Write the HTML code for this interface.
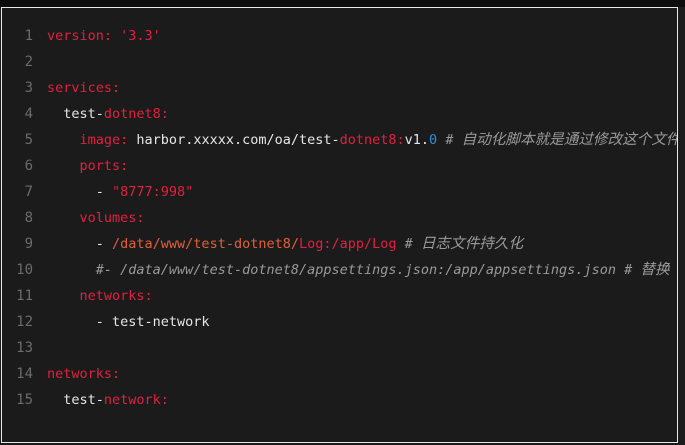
<!DOCTYPE html>
<html><head><meta charset="utf-8"><style>
html,body{margin:0;padding:0;background:#1c1c1c;width:685px;height:445px;overflow:hidden}
.box{position:absolute;left:1px;top:7px;width:675px;height:434px;border:1px solid #e8e8e8;background:#1b1b1b;overflow:hidden}
.top{position:absolute;left:0;top:0;width:685px;height:7px;background:#0d0d0d}
.l{position:absolute;left:0;height:26px;line-height:26px;white-space:pre;font-family:"DejaVu Sans Mono","Liberation Mono","Noto Sans CJK SC",monospace;font-size:13.5px;color:#e6e6e6}
.n{display:inline-block;width:31px;text-align:right;color:#6b6b6b;margin-right:14px;font-size:14px}
.r{color:#e2203f}.o{color:#e2603a}.b{color:#2d8fe0}.c{color:#9a9a9a;font-style:italic}
.k{font-size:14.6px}
</style></head><body>
<div class="top"></div>
<div class="box">
<div class="l" style="top:15px"><span class="n">1</span><span class="r">version: '3.3'</span></div>
<div class="l" style="top:41px"><span class="n">2</span></div>
<div class="l" style="top:67px"><span class="n">3</span><span class="r">services:</span></div>
<div class="l" style="top:93px"><span class="n">4</span>  test-<span class="r">dotnet8:</span></div>
<div class="l" style="top:119px"><span class="n">5</span>    <span class="r">image:</span> harbor.xxxxx.com/oa/test-<span class="r">dotnet8:</span>v1.<span class="b">0</span> <span class="c"># <span class="k">自动化脚本就是通过修改这个文件</span></span></div>
<div class="l" style="top:145px"><span class="n">6</span>    <span class="r">ports:</span></div>
<div class="l" style="top:171px"><span class="n">7</span>      - <span class="r">"8777:998"</span></div>
<div class="l" style="top:197px"><span class="n">8</span>    <span class="r">volumes:</span></div>
<div class="l" style="top:223px"><span class="n">9</span>      - <span class="o">/data/www/test-dotnet8/</span><span class="r">Log:/app/Log</span> <span class="c"># <span class="k">日志文件持久化</span></span></div>
<div class="l" style="top:249px"><span class="n">10</span>      <span class="c">#- /data/www/test-dotnet8/appsettings.json:/app/appsettings.json # <span class="k">替换</span></span></div>
<div class="l" style="top:275px"><span class="n">11</span>    <span class="r">networks:</span></div>
<div class="l" style="top:301px"><span class="n">12</span>      - test-network</div>
<div class="l" style="top:327px"><span class="n">13</span></div>
<div class="l" style="top:353px"><span class="n">14</span><span class="r">networks:</span></div>
<div class="l" style="top:379px"><span class="n">15</span>  test-<span class="r">network:</span></div>
</div>
</body></html>
